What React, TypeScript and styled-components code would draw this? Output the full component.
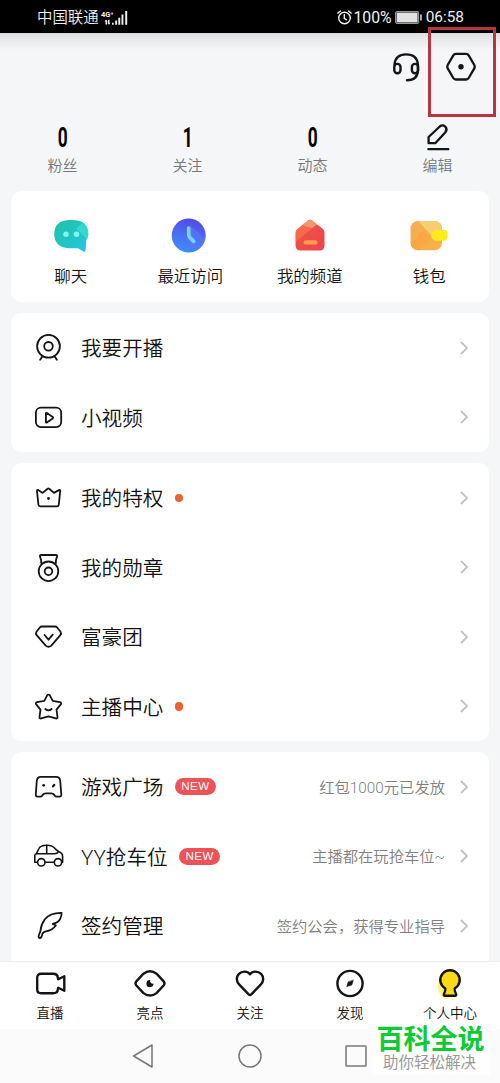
import React from "react";
import styled, { createGlobalStyle } from "styled-components";

const Global = createGlobalStyle`
  * { box-sizing: border-box; }
  body {
    margin: 0;
    background: #f4f6f8;
    font-family: Roboto, "Noto Sans CJK SC", sans-serif;
    font-weight: 350;
    color: #111;
  }
  svg { display: block; flex: none; overflow: visible; }
`;

const Phone = styled.div`
  position: relative;
  width: 500px;
  height: 1083px;
  display: flex;
  flex-direction: column;
  overflow: hidden;
  background: #f4f6f8;
`;

const StatusBar = styled.div`
  flex: none;
  height: 33px;
  padding: 2px 36px 0 37px;
  display: flex;
  align-items: center;
  background: #000;
  color: #f0f0f0;
  font-size: 15.4px;
  font-weight: 400;
  line-height: 31px;
`;

const StatusGroup = styled.div<{ $gap: number }>`
  display: flex;
  align-items: center;
  gap: ${(p) => p.$gap}px;
`;

const Carrier = styled.span`
  padding-top: 1px;
  font-weight: 350;
`;

const Percent = styled.span`
  font-size: 15.8px;
  margin-left: -2px;
`;

const Spacer = styled.div`
  flex: 1;
`;

const Header = styled.div`
  flex: none;
  height: 88px;
  padding: 17px 22px 0 0;
  display: flex;
  justify-content: flex-end;
  align-items: flex-start;
  gap: 22px;
  background: linear-gradient(#dcdddf 0, #e7e8ea 6px, #f4f6f8 17px);
`;

const Stats = styled.div`
  flex: none;
  height: 70px;
  display: grid;
  grid-template-columns: repeat(4, 1fr);
`;

const Stat = styled.div`
  display: flex;
  flex-direction: column;
  align-items: center;
`;

const StatTop = styled.div`
  height: 32px;
  display: flex;
  align-items: center;
  justify-content: center;
`;

const StatValue = styled.span`
  padding-top: 1px;
  font: 700 27px/32px Roboto, sans-serif;
  color: #000;
  transform: scaleX(0.64);
`;

const StatLabel = styled.span`
  font-size: 15px;
  line-height: 26px;
  color: #77787b;
`;

const Content = styled.div`
  flex: 1;
  min-height: 0;
  overflow: hidden;
  padding: 0 11px;
  display: flex;
  flex-direction: column;
  gap: 11px;
`;

const Card = styled.section`
  flex: none;
  background: #fff;
  border-radius: 10px;

  &:last-child {
    padding-bottom: 16px;
  }
`;

const QuickCard = styled(Card)`
  height: 111px;
  display: grid;
  grid-template-columns: repeat(4, 1fr);
`;

const QuickItem = styled.div`
  padding-top: 25px;
  display: flex;
  flex-direction: column;
  align-items: center;
  gap: 8px;
  font-size: 16.4px;
  line-height: 25px;
  white-space: nowrap;
`;

const Row = styled.div`
  height: 69.5px;
  padding: 0 21.5px 0 22px;
  display: flex;
  align-items: center;
`;

const RowLabel = styled.span`
  margin-left: 17px;
  padding-top: 3px;
  font-size: 20.6px;
  line-height: 30px;
`;

const Dot = styled.i`
  width: 8.5px;
  height: 8.5px;
  margin-left: 11.5px;
  border-radius: 50%;
  background: #ee6130;
`;

const NewBadge = styled.span`
  width: 41px;
  height: 17px;
  margin-left: 11.5px;
  border-radius: 9px;
  background: #ec5257;
  color: #fff;
  text-align: center;
  font: 500 11.5px/17px "Liberation Sans", Roboto, sans-serif;
  letter-spacing: 0.5px;
`;

const Hint = styled.span`
  margin-right: 14.5px;
  padding-top: 2px;
  font-size: 15.3px;
  line-height: 24px;
  color: #7f7f7f;
`;

const TabBar = styled.nav`
  flex: none;
  height: 68px;
  border-top: 1px solid #ededee;
  background: #fff;
  display: grid;
  grid-template-columns: repeat(5, 1fr);
`;

const Tab = styled.div`
  padding-top: 6px;
  display: flex;
  flex-direction: column;
  align-items: center;
  gap: 2px;
  font-size: 13.5px;
  line-height: 18px;
`;

const SystemNav = styled.div`
  flex: none;
  height: 54px;
  padding: 0 131px;
  display: flex;
  justify-content: space-between;
  align-items: center;
  background: #fbfbfb;
`;

const Highlight = styled.div`
  position: absolute;
  left: 428px;
  top: 27px;
  width: 68px;
  height: 90px;
  border: 3px solid #b8343f;
`;

const Watermark = styled.div`
  position: absolute;
  left: 371px;
  top: 1024px;
  width: 119px;
  height: 51px;
  background: #fefefe;
  display: flex;
  flex-direction: column;
  align-items: center;
  white-space: nowrap;
`;

const MarkTitle = styled.span`
  font: 700 27px/27px "Noto Sans CJK SC", sans-serif;
  color: #0ccb35;
`;

const MarkSub = styled.span`
  margin-right: 2px;
  font: 400 15.5px/20px "Noto Sans CJK SC", sans-serif;
  color: #999;
`;

const INK = "#151515";

const Icon = ({ size = 31, sw = 1.8, children }: { size?: number; sw?: number; children: React.ReactNode }) => (
  <svg
    width={size}
    height={size}
    viewBox={`0 0 ${size} ${size}`}
    fill="none"
    stroke={INK}
    strokeWidth={sw}
    strokeLinecap="round"
    strokeLinejoin="round"
  >
    {children}
  </svg>
);

const Webcam = () => (
  <Icon>
    <circle cx="15.5" cy="14.3" r="11.4" />
    <circle cx="15.5" cy="14.3" r="4.3" />
    <path d="M9.5 24.2l-2.4 3.6M21.5 24.2l2.4 3.6" />
  </Icon>
);
const Video = () => (
  <Icon>
    <rect x="2.9" y="5.7" width="25.3" height="19.4" rx="5" />
    <path d="M12.9 11.4v8.5q0 1.1 1 .5l5.8-4q.9-.7 0-1.4l-5.8-4q-1-.6-1 .4z" />
  </Icon>
);
const Crown = () => (
  <Icon>
    <path d="M4 9Q3.900 7.500 5.200 8.100L9.700 10.900 14.600 6.700Q15.400 6.100 16.200 6.700L21 10.900 25.900 8.100Q27.300 7.500 27.200 9L25.800 22.700Q25.600 24.400 23.900 24.400H7.300Q5.600 24.400 5.400 22.700Z" />
    <circle cx="15.5" cy="16.500" r="1.400" fill={INK} stroke="none" />
  </Icon>
);
const Medal = () => (
  <Icon>
    <circle cx="15.5" cy="19.3" r="9.8" />
    <circle cx="15.5" cy="19.3" r="3.8" />
    <path d="M8.200 11V8.500L7 4.600Q6.600 3 8.200 3H22.800Q24.500 3 24 4.600L22.900 8.500V11" />
  </Icon>
);
const Diamond = () => (
  <Icon>
    <path d="M8.800 5.500H22.200Q23.400 5.500 24.200 6.500L27.500 10.700Q28.700 12.500 27.300 14.200L18.300 24.600Q15.500 27 12.700 24.600L3.700 14.200Q2.300 12.500 3.500 10.700L6.800 6.500Q7.600 5.500 8.800 5.500Z" />
    <path d="M11.600 14l3.900 4.700 4.200-5" />
  </Icon>
);
const Star = () => (
  <Icon>
    <path d="M14.300 4.200Q15.500 2.900 16.700 4.200L19.700 9.900 26.900 11.200Q28.900 11.900 27.800 13.400L23.500 18.600 24.500 26Q24.600 27.900 22.900 27.400L15.500 25.400 8.100 27.400Q6.400 27.900 6.500 26L7.500 18.600 3.200 13.400Q2.100 11.900 4.100 11.200L11.300 9.900Z" />
    <path d="M12.300 18q3.200 2.700 6.400 0" />
  </Icon>
);
const Game = () => (
  <Icon>
    <path d="M8 5.800H23Q26.700 5.800 27.200 9.500L28.300 23.500Q28.400 25.800 26.300 25.700H23.800Q22.400 25.700 21.700 24.500 20.700 22.400 18.500 22.400H12.500Q10.300 22.400 9.300 24.500 8.600 25.700 7.200 25.700H4.700Q2.600 25.800 2.800 23.500L3.800 9.500Q4.300 5.800 8 5.800Z" />
    <circle cx="10.700" cy="14.300" r="1.400" fill={INK} stroke="none" />
    <path d="M20 15.400l1.300-1.600" strokeWidth="2.200" />
  </Icon>
);
const Car = () => (
  <Icon sw={1.6}>
    <path d="M4.400 21.300H1.800V14.500Q1.800 12.800 3.400 12.700L6 7.500Q7.500 4.200 14 4.200 19.500 4.200 22.300 7.800L25.500 10.600Q29.600 12 29.600 15.500V21.300H28.700M12.200 21.300H21.300" />
    <path d="M3.400 12.700H21.500Q24.500 12.700 25.500 10.600M13.700 4.200v8.500" />
    <circle cx="8.300" cy="21.300" r="3.700" />
    <circle cx="25" cy="21.300" r="3.700" />
  </Icon>
);
const Feather = () => (
  <Icon>
    <path d="M28.600 2.900Q17 2.700 11.700 9.500 7.800 15 7.500 20.800L5.700 25.800Q5.300 28.100 7 28.100 8.700 27.700 9.300 24.200 9.900 22 13 21.400 19 20.400 22.900 15.500L19.800 13.900Q25 12.700 27 9.200 28.700 6.200 28.600 2.900Z" />
  </Icon>
);

const Chevron = () => (
  <svg width="8" height="14" viewBox="0 0 8 14" fill="none" stroke="#c2c2c2" strokeWidth="1.8">
    <path d="M1 1l6 6-6 6" />
  </svg>
);

const Pencil = () => (
  <svg width="24" height="28" viewBox="0 0 24 28" fill="none" stroke={INK} strokeWidth="2.300" strokeLinecap="round" strokeLinejoin="round">
    <path d="M2.600 20.200V14L13.800 3.500Q16.500 1.300 19.200 3.600 21.800 6.500 19.400 9.200L9.300 20.200Z" />
    <path d="M2.400 26.200H22.300" />
  </svg>
);

const Headset = () => (
  <Icon size={32} sw={2.4}>
    <path d="M4.500 14.500Q5.500 4.400 16.200 4.400T27.900 14.500V20.500Q27.500 30.300 17 30.300" />
    <rect x="4.300" y="13.900" width="6.200" height="9.400" rx="3" />
    <rect x="21.900" y="13.900" width="6.200" height="9.400" rx="3" />
  </Icon>
);
const Hexagon = () => (
  <Icon size={34} sw={2.3}>
    <path d="M11.900 3.900H22.100Q23.800 3.900 24.700 5.400L30.300 15Q31.200 16.800 30.300 18.400L24.700 28Q23.800 29.500 22.100 29.500H11.900Q10.200 29.500 9.300 28L3.700 18.400Q2.800 16.800 3.700 15L9.300 5.400Q10.200 3.900 11.900 3.900Z" />
    <circle cx="17" cy="16.700" r="2.700" fill={INK} stroke="none" />
  </Icon>
);

const Signal = () => (
  <svg width="27" height="16" viewBox="0 0 27 16" fill="#f0f0f0">
    <text x="0" y="7" fontSize="7.500" fontWeight="700" fontFamily="Roboto">4G⁺</text>
    <path d="M5 9.500l1.800 2H6v3H4.500v-3h-1zM8 14.800l-1.800-2H7v-3h1.500v3h1zM11 12.700h1.700v2H11zM14.200 10.500h1.900v4.200h-1.900zM17.300 7.800h1.900v6.900h-1.900zM20.500 4.500h1.900v10.200h-1.900zM24.200 1h2v13.700h-2z" />
  </svg>
);
const Alarm = () => (
  <svg width="15" height="15" viewBox="0 0 15 15" fill="none" stroke="#f0f0f0" strokeWidth="1.400" strokeLinecap="round">
    <circle cx="7.500" cy="8" r="5.800" />
    <path d="M7.300 4.800v3.600l2.200 1.400M.8 3.100L3.500 1M14.200 3.100L11.500 1" />
  </svg>
);
const Battery = () => (
  <svg width="28" height="13" viewBox="0 0 28 13">
    <rect x=".6" y=".6" width="23" height="11.800" rx="1.500" fill="none" stroke="#9a9a9a" strokeWidth="1.100" />
    <rect x="1.600" y="1.600" width="21" height="9.800" fill="#e2e2e2" />
    <rect x="25.200" y="3.500" width="1.500" height="6" fill="#dcdcdc" />
  </svg>
);

const ChatIcon = () => (
  <svg width="40" height="40" viewBox="0 0 40 40">
    <defs>
      <linearGradient id="chat" x1="0" y1="0" x2="1" y2="1">
        <stop offset="0" stopColor="#1ec3a9" /><stop offset="1" stopColor="#25c6df" />
      </linearGradient>
    </defs>
    <path d="M17.500 4H23Q37.300 4.800 37.300 18 37.300 21.500 35.300 24L34.600 34Q34.300 36.400 32 35.300L27 32.300H17.500Q3.500 31.300 3.200 18 3.500 4.800 17.500 4Z" fill="url(#chat)" />
    <path d="M25 13L31.500 6.800Q37.300 11 37.300 18 37.300 21 36 23Z" fill="#3be0d2" opacity=".7" />
    <circle cx="15" cy="18.300" r="2.700" fill="#82f6ec" />
    <circle cx="25.500" cy="18.300" r="2.700" fill="#82f6ec" />
  </svg>
);
const ClockIcon = () => (
  <svg width="40" height="40" viewBox="0 0 40 40">
    <defs>
      <linearGradient id="clock" x1=".6" y1="0" x2=".3" y2="1">
        <stop offset="0" stopColor="#5448e8" /><stop offset="1" stopColor="#3f91fb" />
      </linearGradient>
      <linearGradient id="shade" x1="0" y1="0" x2="1" y2="1">
        <stop offset="0" stopColor="#5c7fff" /><stop offset="1" stopColor="#6675f0" stopOpacity=".4" />
      </linearGradient>
    </defs>
    <circle cx="18.700" cy="19.500" r="17" fill="url(#clock)" />
    <path d="M20 10L35.400 22A17 17 0 0 1 24 35.600L17 24Z" fill="url(#shade)" opacity=".65" />
    <path d="M18.700 12V19Q18.900 21 23.700 25.300" fill="none" stroke="#72d6ff" strokeWidth="3.700" strokeLinecap="round" />
  </svg>
);
const HouseIcon = () => (
  <svg width="40" height="40" viewBox="0 0 40 40">
    <defs>
      <linearGradient id="house" x1="0" y1="0" x2="1" y2="1">
        <stop offset="0" stopColor="#ed5b3c" /><stop offset="1" stopColor="#ee4154" />
      </linearGradient>
    </defs>
    <path d="M18 4.500Q20 2.800 22 4.500L33 13Q34.500 14.500 34.500 17V29Q34.500 34.500 29.500 34.500H10.500Q5.500 34.500 5.500 29V17Q5.500 14.500 7.500 13Z" fill="url(#house)" />
    <path d="M18 4.500Q20 2.800 22 4.500L27 8.500 6 25.500V17Q5.500 14.500 7.500 13Z" fill="#ff7b55" opacity=".55" />
    <path d="M18 4.500Q20 2.800 22 4.500L27 8.500 22 12 12 9Z" fill="#f2a377" opacity=".8" />
    <rect x="13.500" y="24.200" width="14" height="4.200" rx="2" fill="#ff9c48" />
  </svg>
);
const WalletIcon = () => (
  <svg width="40" height="40" viewBox="0 0 40 40">
    <defs>
      <linearGradient id="wallet" x1="0" y1="0" x2="1" y2="1">
        <stop offset="0" stopColor="#f3ad57" /><stop offset="1" stopColor="#f8b244" />
      </linearGradient>
    </defs>
    <rect x="1.500" y="5" width="31.500" height="29.300" rx="7.500" fill="url(#wallet)" />
    <path d="M9 5H25.500Q33 5.500 33 12.500V15L24 21Z" fill="#f9ce70" />
    <path d="M1.800 28L14 14 22 22 10 34.300Q2.500 34 1.800 28Z" fill="#ff9e3f" opacity=".5" />
    <path d="M26 14H36.500Q39 15 38.500 18V22Q38 24.500 35.500 24.700H26Q22.500 24 22.300 19.500 22.500 14.500 26 14Z" fill="#ffea1f" />
  </svg>
);

const LiveTab = () => (
  <Icon size={34} sw={2.4}>
    <path d="M8 5.800H20Q24.600 5.800 24.800 9.500L25.200 11.300 31.300 8.200V22.800L25.200 19.700 24.800 21.500Q24.600 25.200 20 25.200H8Q4.200 25.200 4.200 21.200V9.800Q4.200 5.800 8 5.800Z" />
  </Icon>
);
const EyeTab = () => (
  <Icon size={34} sw={2.4}>
    <path d="M3.200 13.600Q7.500 8.800 10.500 5.700 17 .7 23.500 5.700 26.500 8.800 30.800 13.600 32.200 15.400 30.800 17.200 26.500 22 23.500 25.100 17 30.100 10.500 25.100 7.500 22 3.200 17.200 1.800 15.400 3.200 13.600Z" />
    <path d="M17.200 12A3.600 3.600 0 1 0 20.600 15.600 2.800 2.800 0 0 1 17.200 12Z" fill={INK} stroke="none" />
  </Icon>
);
const HeartTab = () => (
  <Icon size={34} sw={2.4}>
    <path d="M17 6.300C19.500 2.800 25 2.700 28.100 5.900 31.200 9.200 30.600 13.700 27.700 16.700L18.300 26.300Q17 27.500 15.700 26.300L6.300 16.700C3.400 13.700 2.800 9.200 5.900 5.900 9 2.700 14.500 2.800 17 6.300Z" />
  </Icon>
);
const CompassTab = () => (
  <Icon size={34} sw={2.4}>
    <circle cx="17" cy="15.500" r="12.600" />
    <path d="M20.300 12.400L18.800 17 13.700 18.600 15.200 14Z" fill={INK} strokeWidth=".6" />
  </Icon>
);
const MeTab = () => (
  <Icon size={34} sw={2.4}>
    <ellipse cx="13.800" cy="18" rx="9" ry="12.500" fill="#ffee43" opacity=".7" stroke="none" />
    <path d="M12.300 20.500A9.700 9.700 0 1 1 21.700 20.500Q21.300 23 23.200 26.300 23.400 27.700 22.200 27.700H11.800Q10.600 27.700 10.800 26.300 12.700 23 12.300 20.500Z" fill="#f9d918" />
  </Icon>
);

interface MenuItem {
  label: string;
  icon: React.ReactNode;
  dot?: boolean;
  isNew?: boolean;
  hint?: string;
}

const groups: MenuItem[][] = [
  [
    { label: "我要开播", icon: <Webcam /> },
    { label: "小视频", icon: <Video /> },
  ],
  [
    { label: "我的特权", icon: <Crown />, dot: true },
    { label: "我的勋章", icon: <Medal /> },
    { label: "富豪团", icon: <Diamond /> },
    { label: "主播中心", icon: <Star />, dot: true },
  ],
  [
    { label: "游戏广场", icon: <Game />, isNew: true, hint: "红包1000元已发放" },
    { label: "YY抢车位", icon: <Car />, isNew: true, hint: "主播都在玩抢车位~" },
    { label: "签约管理", icon: <Feather />, hint: "签约公会，获得专业指导" },
  ],
];

const stats = [
  { label: "粉丝", value: "0" },
  { label: "关注", value: "1" },
  { label: "动态", value: "0" },
  { label: "编辑", value: null },
];

const shortcuts = [
  { label: "聊天", icon: <ChatIcon /> },
  { label: "最近访问", icon: <ClockIcon /> },
  { label: "我的频道", icon: <HouseIcon /> },
  { label: "钱包", icon: <WalletIcon /> },
];

const tabs = [
  { label: "直播", icon: <LiveTab /> },
  { label: "亮点", icon: <EyeTab /> },
  { label: "关注", icon: <HeartTab /> },
  { label: "发现", icon: <CompassTab /> },
  { label: "个人中心", icon: <MeTab /> },
];

export default function App() {
  return (
    <>
      <Global />
      <Phone>
        <StatusBar>
          <StatusGroup $gap={2}>
            <Carrier>中国联通</Carrier>
            <Signal />
          </StatusGroup>
          <Spacer />
          <StatusGroup $gap={3}>
            <Alarm />
            <Percent>100%</Percent>
            <Battery />
            <span>06:58</span>
          </StatusGroup>
        </StatusBar>
        <Header>
          <Headset />
          <Hexagon />
        </Header>
        <Stats>
          {stats.map((s) => (
            <Stat key={s.label}>
              <StatTop>{s.value === null ? <Pencil /> : <StatValue>{s.value}</StatValue>}</StatTop>
              <StatLabel>{s.label}</StatLabel>
            </Stat>
          ))}
        </Stats>
        <Content>
          <QuickCard>
            {shortcuts.map((s) => (
              <QuickItem key={s.label}>
                {s.icon}
                <span>{s.label}</span>
              </QuickItem>
            ))}
          </QuickCard>
          {groups.map((items) => (
            <Card key={items[0].label}>
              {items.map((item) => (
                <Row key={item.label}>
                  {item.icon}
                  <RowLabel>{item.label}</RowLabel>
                  {item.dot && <Dot />}
                  {item.isNew && <NewBadge>NEW</NewBadge>}
                  <Spacer />
                  {item.hint && <Hint>{item.hint}</Hint>}
                  <Chevron />
                </Row>
              ))}
            </Card>
          ))}
        </Content>
        <TabBar>
          {tabs.map((t) => (
            <Tab key={t.label}>
              {t.icon}
              <span>{t.label}</span>
            </Tab>
          ))}
        </TabBar>
        <SystemNav>
          <svg width="26" height="26" viewBox="0 0 26 26" fill="none" stroke="#777" strokeWidth="1.500" strokeLinejoin="round">
            <path d="M2.600 13L21 2V24Z" />
          </svg>
          <svg width="26" height="26" viewBox="0 0 26 26" fill="none" stroke="#777" strokeWidth="1.500">
            <circle cx="13" cy="13" r="11" />
          </svg>
          <svg width="26" height="26" viewBox="0 0 26 26" fill="none" stroke="#777" strokeWidth="1.500">
            <rect x="3" y="3" width="20" height="20" rx=".6" />
          </svg>
        </SystemNav>
        <Highlight />
        <Watermark>
          <MarkTitle>百科全说</MarkTitle>
          <MarkSub>助你轻松解决</MarkSub>
        </Watermark>
      </Phone>
    </>
  );
}
